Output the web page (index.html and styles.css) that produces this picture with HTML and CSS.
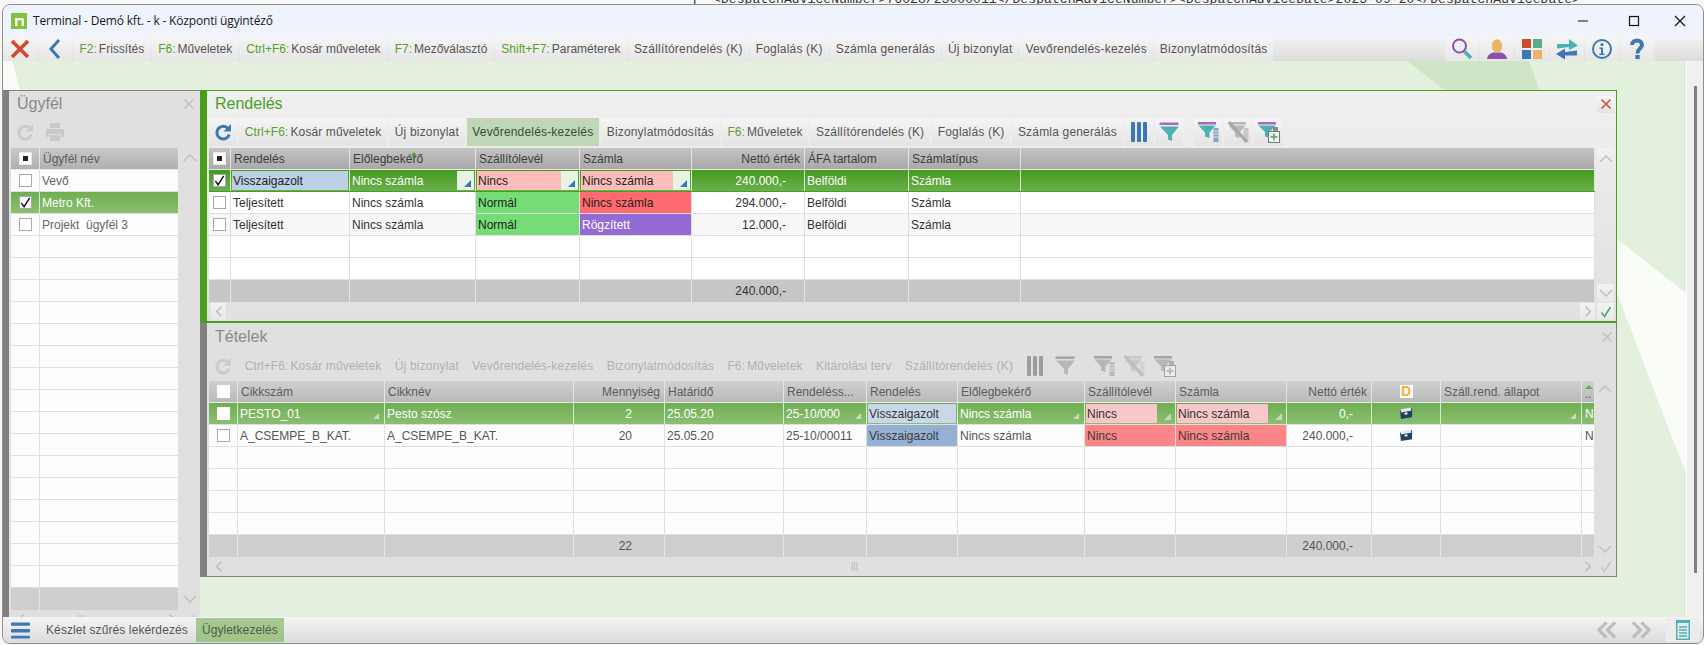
FILE: index.html
```html
<!DOCTYPE html>
<html lang="hu">
<head>
<meta charset="utf-8">
<title>Terminal</title>
<link rel="stylesheet" href="styles.css">
</head>
<body>
<svg class="sprite" aria-hidden="true">
  <symbol id="i-refresh" viewBox="0 0 24 24"><path d="M18.5 8.5A7.6 7.6 0 1 0 19.5 15" fill="none" stroke="currentColor" stroke-width="3.6"/><path d="M21.5 2.5V11.5H12.5Z" fill="currentColor"/></symbol>
  <symbol id="i-bars" viewBox="0 0 20 20"><rect x="2" y="0" width="4" height="20" rx="1" fill="#3c78b5"/><rect x="8" y="0" width="4" height="20" rx="1" fill="#3c78b5"/><rect x="14" y="0" width="4" height="20" rx="1" fill="#3c78b5"/></symbol>
  <symbol id="i-filter" viewBox="0 0 20 20"><rect x="0.500" y="0.500" width="19" height="2.500" fill="#a56bc0"/><path d="M1 4.500H20L13 13V19L9 17.500V13Z" fill="#4db0b5"/></symbol>
  <symbol id="i-filter-col" viewBox="0 0 28 28"><rect x="4" y="4" width="18" height="2.500" fill="#a56bc0"/><path d="M4.500 7.500H21.500L15.500 14.500V20L11 18.500V14.500Z" fill="#4db0b5"/><rect x="19.500" y="10" width="5" height="14" fill="#8b9fc0"/><path d="M19.500 13H24.500M19.500 16H24.500M19.500 19H24.500" stroke="#dfe6f0"/></symbol>
  <symbol id="i-filter-off" viewBox="0 0 28 28"><rect x="4" y="4" width="18" height="2.500" fill="#b8b8b8"/><path d="M4.500 7.500H21.500L15.500 14.500V20L11 18.500V14.500Z" fill="#b8b8b8"/><rect x="19.500" y="10" width="5" height="14" fill="#c8c8c8"/><path d="M5 4L23 24" stroke="#a8a8a8" stroke-width="3"/></symbol>
  <symbol id="i-filter-add" viewBox="0 0 28 28"><rect x="4" y="4" width="18" height="2.500" fill="#a56bc0"/><path d="M4.500 7.500H21.500L15.500 14V20L11 18.500V14Z" fill="#4db0b5"/><rect x="19" y="9" width="5" height="4" fill="#8c8c8c"/><rect x="14.500" y="13.500" width="11" height="11" fill="#f1f1f1" stroke="#777"/><path d="M20 15.500V22.500M16.500 19H23.500" stroke="#46a86c" stroke-width="1.500"/></symbol>
  <symbol id="i-case" viewBox="0 0 14 14"><path d="M0 4L13 1V11L1 13Z" fill="#23405f"/><path d="M1 2.500L12 0.500V4L1 6Z" fill="#dbe9f2"/><rect x="5" y="6" width="3" height="2" fill="#fff"/></symbol>
  <symbol id="i-up" viewBox="0 0 16 10"><path d="M2 8L8 2L14 8" fill="none" stroke="currentColor" stroke-width="1.600"/></symbol>
  <symbol id="i-down" viewBox="0 0 16 10"><path d="M2 2L8 8L14 2" fill="none" stroke="currentColor" stroke-width="1.600"/></symbol>
  <symbol id="i-left" viewBox="0 0 10 16"><path d="M8 2L2 8L8 14" fill="none" stroke="currentColor" stroke-width="1.600"/></symbol>
  <symbol id="i-right" viewBox="0 0 10 16"><path d="M2 2L8 8L2 14" fill="none" stroke="currentColor" stroke-width="1.600"/></symbol>
  <symbol id="i-check" viewBox="0 0 14 14"><path d="M2.500 7.500L5.500 11.500L11.500 2" fill="none" stroke="currentColor" stroke-width="1.500"/></symbol>
  <symbol id="i-x" viewBox="0 0 16 16"><path d="M2 2L14 14M14 2L2 14" fill="none" stroke="currentColor" stroke-width="2"/></symbol>
</svg>

<div class="desk"><span class="desk-brace">j</span><span class="desk-xml">&lt;DespatchAdviceNumber&gt;76028/23000011&lt;/DespatchAdviceNumber&gt;&lt;DespatchAdviceDate&gt;2023-09-20&lt;/DespatchAdviceDate&gt;</span></div>

<div class="win">
  <header class="titlebar">
    <svg class="logo" viewBox="0 0 16 16"><rect width="16" height="16" fill="#83c13f"/><path d="M4 13V5H11.500Q13 5 13 6.500V13H10.500V7.200H6.500V13Z" fill="#f4f7e6"/></svg>
    <span class="title-text">Terminal - Demó kft. - k - Központi ügyintéző</span>
    <div class="winctl">
      <svg viewBox="0 0 46 30" class="wc"><path d="M13 15H23" stroke="#111" stroke-width="1.200"/></svg>
      <svg viewBox="0 0 46 30" class="wc"><rect x="18.500" y="10.500" width="9" height="9" fill="none" stroke="#111" stroke-width="1.200"/></svg>
      <svg viewBox="0 0 46 30" class="wc"><path d="M18 10L28 20M28 10L18 20" stroke="#111" stroke-width="1.200"/></svg>
    </div>
  </header>

  <nav class="topbar">
    <button class="btn ic-main"><svg class="ico20" viewBox="0 0 20 20"><path d="M2 2L18 18M18 2L2 18" stroke="#d24a2e" stroke-width="3.600" fill="none"/></svg></button>
    <button class="btn ic-back"><svg class="ico20" viewBox="0 0 20 20"><path d="M14 1L6 10L14 19" stroke="#3c78b5" stroke-width="3" fill="none"/></svg></button>
    <button class="btn lab"><b>F2:</b>Frissítés</button>
    <button class="btn lab"><b>F6:</b>Műveletek</button>
    <button class="btn lab"><b>Ctrl+F6:</b>Kosár műveletek</button>
    <button class="btn lab"><b>F7:</b>Mezőválasztó</button>
    <button class="btn lab"><b>Shift+F7:</b>Paraméterek</button>
    <button class="btn">Szállítórendelés (K)</button>
    <button class="btn">Foglalás (K)</button>
    <button class="btn">Számla generálás</button>
    <button class="btn">Új bizonylat</button>
    <button class="btn">Vevőrendelés-kezelés</button>
    <button class="btn">Bizonylatmódosítás</button>
    <div class="topicons">
      <button class="btn ic-top"><svg class="ico24" viewBox="0 0 24 24"><circle cx="9.500" cy="9" r="6.500" fill="none" stroke="#8e4fa8" stroke-width="2"/><path d="M14.500 14.500L21 21" stroke="#4db0b5" stroke-width="3.500"/></svg></button>
      <button class="btn ic-top"><svg class="ico24" viewBox="0 0 24 24"><path d="M2 22Q2.500 17 8 15.500H16Q21.500 17 22 22Z" fill="#8e4fa8"/><ellipse cx="12" cy="9" rx="5.200" ry="6.800" fill="#ecb565"/></svg></button>
      <button class="btn ic-top"><svg class="ico24" viewBox="0 0 24 24"><rect x="2" y="2" width="9" height="9" fill="#cf4b2e"/><rect x="13" y="2" width="9" height="9" fill="#5aae8c"/><rect x="2" y="13" width="9" height="9" fill="#3c78b5"/><rect x="13" y="13" width="9" height="9" fill="#ecb565"/></svg></button>
      <button class="btn ic-top"><svg class="ico24" viewBox="0 0 24 24"><path d="M2 7H14V2L23 8.500L14 13V10L2 11.500Z" fill="#4db0b5"/><path d="M22 13.500L10 15V11.500L1 17L10 22.500V18.500H22Z" fill="#3c78b5"/></svg></button>
      <button class="btn ic-top"><svg class="ico24" viewBox="0 0 24 24"><circle cx="12" cy="12" r="9" fill="none" stroke="#3c78b5" stroke-width="2"/><circle cx="12" cy="7.500" r="1.600" fill="#3c78b5"/><path d="M9.500 10.500H13V16.500H14.500V18H9.500V16.500H11V12H9.500Z" fill="#3c78b5"/></svg></button>
      <button class="btn ic-top"><svg class="ico24" viewBox="0 0 24 24"><path d="M7 8C7 2 17 2 17 8C17 11.500 12.500 11.500 12.500 16.500" fill="none" stroke="#3c78b5" stroke-width="4"/><rect x="10.300" y="18" width="4.400" height="4" fill="#3c78b5"/></svg></button>
    </div>
  </nav>

  <main class="main">
    <svg class="wall" viewBox="0 0 1683 556" preserveAspectRatio="none">
      <path d="M0 0H9L17 29H0Z" fill="#f9fcf7"/>
      <path d="M1404 0H1526L1570 120H1560Z" fill="#cfe5c5"/>
      <path d="M1540 120L1683 232V411L1670 379L1614 232Z" fill="#f9fcf7"/>
    </svg>

    <section class="panel side">
      <h2 class="ptitle">Ügyfél<svg class="xbtn"><use href="#i-x"/></svg></h2>
      <div class="ptools">
        <button class="tb tb-icon off"><svg class="ico20"><use href="#i-refresh"/></svg></button>
        <button class="tb tb-icon off"><svg class="ico20" viewBox="0 0 20 20"><rect x="5" y="1" width="10" height="5" fill="currentColor"/><path d="M1 7H19V15H16V12H4V15H1Z" fill="currentColor"/><rect x="5" y="13" width="10" height="6" fill="currentColor"/></svg></button>
      </div>
      <div class="body">
        <div class="g g-s">
          <div class="row head"><div class="c mid"><i class="cb mix"></i></div><div class="c">Ügyfél név</div></div>
          <div class="row"><div class="c mid"><i class="cb"></i></div><div class="c">Vevő</div></div>
          <div class="row sel"><div class="c mid"><i class="cb"><svg><use href="#i-check"/></svg></i></div><div class="c">Metro Kft.</div></div>
          <div class="row"><div class="c mid"><i class="cb"></i></div><div class="c">Projekt&nbsp; ügyfél 3</div></div>
          <div class="row"><div class="c"></div><div class="c"></div></div>
          <div class="row"><div class="c"></div><div class="c"></div></div>
          <div class="row"><div class="c"></div><div class="c"></div></div>
          <div class="row"><div class="c"></div><div class="c"></div></div>
          <div class="row"><div class="c"></div><div class="c"></div></div>
          <div class="row"><div class="c"></div><div class="c"></div></div>
          <div class="row"><div class="c"></div><div class="c"></div></div>
          <div class="row"><div class="c"></div><div class="c"></div></div>
          <div class="row"><div class="c"></div><div class="c"></div></div>
          <div class="row"><div class="c"></div><div class="c"></div></div>
          <div class="row"><div class="c"></div><div class="c"></div></div>
          <div class="row"><div class="c"></div><div class="c"></div></div>
          <div class="row"><div class="c"></div><div class="c"></div></div>
          <div class="row"><div class="c"></div><div class="c"></div></div>
          <div class="row"><div class="c"></div><div class="c"></div></div>
          <div class="row"><div class="c"></div><div class="c"></div></div>
          <div class="row foot"><div class="c"></div><div class="c"></div></div>
        </div>
        <div class="vs"><svg class="chev"><use href="#i-up"/></svg><svg class="chev"><use href="#i-down"/></svg></div>
      </div>
      <div class="hs"><span class="stile w"><svg class="chevh"><use href="#i-left"/></svg></span><span class="thumb">|||</span><span class="stile w"><svg class="chevh"><use href="#i-right"/></svg></span><span class="stile ok"><svg><use href="#i-check"/></svg></span></div>
    </section>

    <div class="stack">
      <section class="panel orders">
        <h2 class="ptitle">Rendelés<span class="xred"><svg><use href="#i-x"/></svg></span></h2>
        <div class="ptools">
          <button class="tb tb-icon"><svg class="ico20 blue"><use href="#i-refresh"/></svg></button>
          <button class="tb lab"><b>Ctrl+F6:</b>Kosár műveletek</button>
          <button class="tb">Új bizonylat</button>
          <button class="tb act">Vevőrendelés-kezelés</button>
          <button class="tb">Bizonylatmódosítás</button>
          <button class="tb lab"><b>F6:</b>Műveletek</button>
          <button class="tb">Szállítórendelés (K)</button>
          <button class="tb">Foglalás (K)</button>
          <button class="tb">Számla generálás</button>
          <button class="tb tb-icon"><svg class="ico20"><use href="#i-bars"/></svg></button>
          <button class="tb tb-icon"><svg class="ico20"><use href="#i-filter"/></svg></button>
          <button class="tb tb-icon tb-far"><svg class="ico28"><use href="#i-filter-col"/></svg></button>
          <button class="tb tb-icon"><svg class="ico28"><use href="#i-filter-off"/></svg></button>
          <button class="tb tb-icon"><svg class="ico28"><use href="#i-filter-add"/></svg></button>
        </div>
        <div class="body">
          <div class="g g-r">
            <div class="row head"><div class="c mid"><i class="cb mix"></i></div><div class="c">Rendelés</div><div class="c sort">Előlegbekérő</div><div class="c">Szállítólevél</div><div class="c">Számla</div><div class="c num">Nettó érték</div><div class="c">ÁFA tartalom</div><div class="c">Számlatípus</div><div class="c"></div></div>
            <div class="row sel"><div class="c mid"><i class="cb"><svg><use href="#i-check"/></svg></i></div><div class="c ed"><span class="fill st-blue">Visszaigazolt</span></div><div class="c ed"><span class="fill">Nincs számla</span><i class="tile"></i></div><div class="c ed"><span class="fill st-pink">Nincs</span><i class="tile"></i></div><div class="c ed"><span class="fill st-pink">Nincs számla</span><i class="tile"></i></div><div class="c val">240.000,-</div><div class="c">Belföldi</div><div class="c">Számla</div><div class="c"></div></div>
            <div class="row"><div class="c mid"><i class="cb"></i></div><div class="c">Teljesített</div><div class="c">Nincs számla</div><div class="c st-green">Normál</div><div class="c st-red">Nincs számla</div><div class="c val">294.000,-</div><div class="c">Belföldi</div><div class="c">Számla</div><div class="c"></div></div>
            <div class="row alt"><div class="c mid"><i class="cb"></i></div><div class="c">Teljesített</div><div class="c">Nincs számla</div><div class="c st-green">Normál</div><div class="c st-purple">Rögzített</div><div class="c val">12.000,-</div><div class="c">Belföldi</div><div class="c">Számla</div><div class="c"></div></div>
            <div class="row"><div class="c"></div><div class="c"></div><div class="c"></div><div class="c"></div><div class="c"></div><div class="c"></div><div class="c"></div><div class="c"></div><div class="c"></div></div>
            <div class="row"><div class="c"></div><div class="c"></div><div class="c"></div><div class="c"></div><div class="c"></div><div class="c"></div><div class="c"></div><div class="c"></div><div class="c"></div></div>
            <div class="row foot"><div class="c"></div><div class="c"></div><div class="c"></div><div class="c"></div><div class="c"></div><div class="c val">240.000,-</div><div class="c"></div><div class="c"></div><div class="c"></div></div>
          </div>
          <div class="vs"><span class="stile"><svg class="chev"><use href="#i-up"/></svg></span><span class="stile"><svg class="chev"><use href="#i-down"/></svg></span></div>
        </div>
        <div class="hs"><span class="stile w"><svg class="chevh"><use href="#i-left"/></svg></span><span class="stile w"><svg class="chevh"><use href="#i-right"/></svg></span><span class="stile ok"><svg><use href="#i-check"/></svg></span></div>
      </section>

      <section class="panel items">
        <h2 class="ptitle">Tételek<svg class="xbtn"><use href="#i-x"/></svg></h2>
        <div class="ptools">
          <button class="tb tb-icon off"><svg class="ico20"><use href="#i-refresh"/></svg></button>
          <button class="tb lab"><b>Ctrl+F6:</b>Kosár műveletek</button>
          <button class="tb">Új bizonylat</button>
          <button class="tb">Vevőrendelés-kezelés</button>
          <button class="tb">Bizonylatmódosítás</button>
          <button class="tb lab"><b>F6:</b>Műveletek</button>
          <button class="tb">Kitárolási terv</button>
          <button class="tb">Szállítórendelés (K)</button>
          <button class="tb tb-icon off"><svg class="ico20"><use href="#i-bars"/></svg></button>
          <button class="tb tb-icon off"><svg class="ico20"><use href="#i-filter"/></svg></button>
          <button class="tb tb-icon tb-far off"><svg class="ico28"><use href="#i-filter-col"/></svg></button>
          <button class="tb tb-icon off"><svg class="ico28"><use href="#i-filter-off"/></svg></button>
          <button class="tb tb-icon off"><svg class="ico28"><use href="#i-filter-add"/></svg></button>
        </div>
        <div class="body">
          <div class="g g-t">
            <div class="row head"><div class="c mid"><i class="cb"></i></div><div class="c">Cikkszám</div><div class="c">Cikknév</div><div class="c num">Mennyiség</div><div class="c">Határidő</div><div class="c">Rendeléss...</div><div class="c">Rendelés</div><div class="c">Előlegbekérő</div><div class="c">Szállítólevél</div><div class="c">Számla</div><div class="c num">Nettó érték</div><div class="c mid"><span class="dbadge">D</span></div><div class="c">Száll.rend. állapot</div><div class="c sort2">..</div></div>
            <div class="row sel"><div class="c mid"><i class="cb"></i></div><div class="c pick">PESTO_01</div><div class="c">Pesto szósz</div><div class="c qty">2</div><div class="c">25.05.20</div><div class="c pick">25-10/000</div><div class="c ed"><span class="fill st-blue">Visszaigazolt</span></div><div class="c pick">Nincs számla</div><div class="c ed"><span class="fill st-pink">Nincs</span><i class="tile"></i></div><div class="c ed"><span class="fill st-pink">Nincs számla</span><i class="tile"></i></div><div class="c val">0,-</div><div class="c mid"><svg class="case"><use href="#i-case"/></svg></div><div class="c pick"></div><div class="c clip">N</div></div>
            <div class="row"><div class="c mid"><i class="cb"></i></div><div class="c">A_CSEMPE_B_KAT.</div><div class="c">A_CSEMPE_B_KAT.</div><div class="c qty">20</div><div class="c">25.05.20</div><div class="c">25-10/00011</div><div class="c st-blue2">Visszaigazolt</div><div class="c">Nincs számla</div><div class="c st-red2">Nincs</div><div class="c st-red2">Nincs számla</div><div class="c val">240.000,-</div><div class="c mid"><svg class="case"><use href="#i-case"/></svg></div><div class="c"></div><div class="c clip">N</div></div>
            <div class="row"><div class="c"></div><div class="c"></div><div class="c"></div><div class="c"></div><div class="c"></div><div class="c"></div><div class="c"></div><div class="c"></div><div class="c"></div><div class="c"></div><div class="c"></div><div class="c"></div><div class="c"></div><div class="c"></div></div>
            <div class="row"><div class="c"></div><div class="c"></div><div class="c"></div><div class="c"></div><div class="c"></div><div class="c"></div><div class="c"></div><div class="c"></div><div class="c"></div><div class="c"></div><div class="c"></div><div class="c"></div><div class="c"></div><div class="c"></div></div>
            <div class="row"><div class="c"></div><div class="c"></div><div class="c"></div><div class="c"></div><div class="c"></div><div class="c"></div><div class="c"></div><div class="c"></div><div class="c"></div><div class="c"></div><div class="c"></div><div class="c"></div><div class="c"></div><div class="c"></div></div>
            <div class="row"><div class="c"></div><div class="c"></div><div class="c"></div><div class="c"></div><div class="c"></div><div class="c"></div><div class="c"></div><div class="c"></div><div class="c"></div><div class="c"></div><div class="c"></div><div class="c"></div><div class="c"></div><div class="c"></div></div>
            <div class="row foot"><div class="c"></div><div class="c"></div><div class="c"></div><div class="c qty">22</div><div class="c"></div><div class="c"></div><div class="c"></div><div class="c"></div><div class="c"></div><div class="c"></div><div class="c val">240.000,-</div><div class="c"></div><div class="c"></div><div class="c"></div></div>
          </div>
          <div class="vs"><svg class="chev"><use href="#i-up"/></svg><svg class="chev"><use href="#i-down"/></svg></div>
        </div>
        <div class="hs"><span class="stile w"><svg class="chevh"><use href="#i-left"/></svg></span><span class="thumb">|||</span><span class="stile w"><svg class="chevh"><use href="#i-right"/></svg></span><span class="stile ok"><svg><use href="#i-check"/></svg></span></div>
      </section>
    </div>

    <div class="strip"><i class="thumbv"></i></div>
  </main>

  <footer class="bottom">
    <button class="bb bb-menu"><svg viewBox="0 0 20 18" class="ico20"><rect y="1" width="20" height="3.500" rx="1" fill="#3c78b5"/><rect y="8" width="20" height="3.500" rx="1" fill="#3c78b5"/><rect y="15" width="20" height="3" rx="1" fill="#3c78b5"/></svg></button>
    <button class="bb">Készlet szűrés lekérdezés</button>
    <button class="bb act">Ügyletkezelés</button>
    <div class="bottom-right">
      <svg class="dbl" viewBox="0 0 22 20"><path d="M11 2L3 10L11 18M20 2L12 10L20 18" fill="none" stroke="#bdbdbd" stroke-width="3.400"/></svg>
      <svg class="dbl" viewBox="0 0 22 20"><path d="M2 2L10 10L2 18M11 2L19 10L11 18" fill="none" stroke="#bdbdbd" stroke-width="3.400"/></svg>
      <span class="listbtn"><svg viewBox="0 0 14 20" class="listico"><rect x="0.750" y="0.750" width="12.500" height="18.500" fill="none" stroke="#4db0b5" stroke-width="1.500"/><rect x="0" y="0" width="14" height="3" fill="#4db0b5"/><path d="M3 7H11M3 10H11M3 13H11M3 16H11" stroke="#4db0b5" stroke-width="1.500"/></svg></span>
    </div>
  </footer>
</div>
</body>
</html>
```
FILE: styles.css
```css
* { box-sizing: border-box; }
html, body { margin: 0; height: 100%; overflow: hidden; background: #f7f7f7; }
body { font: 12px/1 "Liberation Sans", Arial, sans-serif; color: #333; }
button { font: inherit; color: inherit; border: 0; padding: 0; background: none; }
b { font-weight: 400; color: #5c9e2a; margin-right: 2px; }
.sprite { display: none; }

.desk { height: 4px; overflow: hidden; line-height: 0; white-space: nowrap; display: flex; font-family: "Liberation Mono", monospace; font-size: 13px; color: #333; padding-left: 690px; }
.desk-brace { width: 23px; }
.desk-xml { letter-spacing: .08px; }

.win { margin-left: 2px; width: 1702px; height: 640px; border: 1px solid #8f8f8f; border-radius: 8px; overflow: hidden; display: flex; flex-direction: column; background: #e4f0de; }

.titlebar { height: 31px; flex: none; display: flex; align-items: center; background: #eff3fb; padding-left: 8px; }
.logo { width: 16px; height: 16px; flex: none; }
.title-text { margin-left: 6px; font: 12px "Open Sans", sans-serif; color: #1a1a1a; letter-spacing: -.17px; }
.winctl { margin-left: auto; display: flex; }
.wc { width: 46px; height: 30px; display: block; }

.topbar { height: 25px; flex: none; display: flex; gap: 1px; background: linear-gradient(#f4f4f4, #dcdcdc); padding-right: 49px; color: #555; }
.btn { height: 25px; padding: 0 6px; white-space: nowrap; letter-spacing: .2px; background: linear-gradient(#f6f6f6, #e6e6e6); }
.btn.lab { padding: 0 6.5px; letter-spacing: 0; }
.ic-main { width: 35px; padding: 0 7px; display: flex; align-items: center; }
.ic-back { width: 33px; padding: 0 6px; display: flex; align-items: center; }
.topicons { margin-left: auto; display: flex; gap: 1px; }
.ic-top { width: 34px; padding: 0 5px; display: flex; align-items: center; }
.ico20 { width: 20px; height: 20px; display: block; }
.ico24 { width: 24px; height: 24px; display: block; }
.ico28 { width: 28px; height: 28px; display: block; }
.blue { color: #3c78b5; }

.main { flex: 1; min-height: 0; position: relative; display: flex; padding-top: 29px; }
.wall { position: absolute; left: 0; top: 0; width: 1683px; height: 556px; }

.panel { position: relative; display: flex; flex-direction: column; background: #e0e0e0; }
.side { width: 197px; height: 527px; overflow: hidden; border-left: 6px solid #808080; border-top: 1px solid #808080; color: #666; }
.stack { width: 1417px; position: relative; flex: none; display: flex; flex-direction: column; }
.orders { height: 233px; border: solid #4a9e1f; border-width: 1px 1px 2px 7px; background: linear-gradient(#f0f0f0, #e0e0e0); }
.items { height: 254px; border: solid #808080; border-width: 0 1px 1px 7px; color: #555; }

.ptitle { margin: 0; height: 27px; flex: none; display: flex; align-items: center; justify-content: space-between; font: 400 16px "Liberation Sans", Arial, sans-serif; padding: 0 2px 2px 8px; color: #8a8a8a; }
.orders .ptitle { color: #4a9e1f; padding-bottom: 1px; }
.items .ptitle { height: 29px; }
.xbtn { width: 12px; height: 12px; margin-right: 1px; color: #c2c2c2; }
.side .xbtn { margin-right: 3px; }
.xred { width: 17px; height: 17px; background: linear-gradient(#f7f7f7, #e4e4e4); display: flex; align-items: center; justify-content: center; color: #d24a2e; }
.xred svg { width: 12px; height: 12px; }

.ptools { height: 28px; flex: none; display: flex; gap: 2px; padding-left: 2px; color: #555; margin-bottom: 2px; }
.items .ptools { margin-bottom: 1px; color: #b0b0b0; }
.items .ptools b { color: #b0b0b0; }
.tb { height: 28px; padding: 0 5.7px; white-space: nowrap; letter-spacing: .18px; background: linear-gradient(#f5f5f5, #e3e3e3); }
.tb.lab { letter-spacing: .1px; }
.items .tb, .side .tb { background: none; }
.tb.act { background: #c0d7b7; color: #3c4d35; }
.tb-icon { width: 28px; padding: 0; display: flex; align-items: center; justify-content: center; }
.tb-far { margin-left: 9px; }
.off { color: #bcbcbc; }
.off svg { filter: grayscale(1) opacity(.6); }

.body { display: flex; flex: none; }
.g { flex: none; }
.g-s { width: 168px; margin-left: 2px; }
.g-r { width: 1386px; margin-left: 2px; }
.g-t { width: 1386px; margin-left: 2px; }
.row { display: grid; height: 22px; background: #fff; border-bottom: 1px solid #e0e0e0; }
.g-s .row { grid-template-columns: 29px 139px; background: #fdfdfd; }
.g-r .row { grid-template-columns: 22px 119px 126px 104px 112px 113px 104px 112px 574px; }
.g-t .row { grid-template-columns: 29px 147px 189px 91px 119px 83px 91px 127px 91px 111px 85px 69px 141px 13px; background: #fdfdfd; }
.row.alt { background: #f7f7f7; }
.c { border-right: 1px solid #e0e0e0; display: flex; align-items: center; padding-left: 2px; overflow: hidden; white-space: nowrap; min-width: 0; }
.c.mid { padding: 0; justify-content: center; }
.c.num { justify-content: flex-end; padding-right: 4px; }
.c.val { justify-content: flex-end; padding-right: 18px; }
.c.qty { justify-content: flex-end; padding-right: 32px; }

.row.head { background: linear-gradient(#c3c3c3, #a9a9a9); border-bottom-color: #e8e8e8; color: #3d3d3d; }
.items .row.head { background: linear-gradient(#d0d0d0, #b9b9b9); color: #5c5c5c; }
.side .row.head { background: linear-gradient(#c9c9c9, #b0b0b0); color: #5c5c5c; }
.head .c { border-right-color: #e4e4e4; padding-left: 3px; }
.head .c.mid { padding: 0; }
.row.sel { background: linear-gradient(#459a1c, #6bb04f); color: #fff; border-bottom-color: #4a9e1f; }
.side .row.sel, .items .row.sel { background: linear-gradient(#6fae52, #8abf70); border-bottom-color: #e0e0e0; }
.sel .c { border-right-color: #d8ead0; }
.foot.row { background: #c6c6c6; border-bottom: 0; }
.side .foot.row, .items .foot.row { background: #cfcfcf; }
.foot .c { border-right-color: #e4e4e4; }

.cb { width: 13px; height: 13px; background: #fff; border: 1px solid #a9a9a9; display: flex; align-items: center; justify-content: center; color: #111; }
.cb svg { width: 13px; height: 13px; flex: none; }
.cb.mix::after { content: ""; width: 5px; height: 5px; background: #222; }
.head .cb { border-color: #e8e8e8; }
.items .head .cb, .items .sel .cb { border-color: #fff; }
.sort, .sort2 { position: relative; }
.sort::before { content: ""; position: absolute; left: 61px; top: 4px; border: solid transparent; border-width: 0 3px 4px; border-bottom-color: #4a9e1f; }
.sort2::before { content: ""; position: absolute; left: 3px; top: 4px; border: solid transparent; border-width: 0 4px 4px; border-bottom-color: #5daf3e; }
.sort2 { align-items: flex-end; padding-bottom: 2px; }

.c.ed { padding: 1px; align-items: stretch; }
.fill { flex: 1; min-width: 0; display: flex; align-items: center; padding-left: 1px; }
.st-blue { background: #bcd0e6; color: #222; }
.st-pink { background: #ffbcbc; color: #222; }
.items .st-blue { background: #c9d8e9; color: #333; }
.items .st-pink { background: #f8c7c9; color: #333; }
.tile { flex: none; width: 17px; background: #e8f3e3; display: flex; align-items: flex-end; justify-content: flex-end; padding: 0 3px 3px 0; }
.tile::after { content: ""; border: solid transparent; border-width: 0 0 7px 7px; border-bottom-color: #3a78c0; }
.items .tile { background: none; }
.items .tile::after { border-bottom-color: #c9d6c2; }
.pick { position: relative; }
.pick::after { content: ""; position: absolute; right: 5px; bottom: 5px; border-style: solid; border-color: transparent transparent #c9d6c2; border-width: 0 0 6px 6px; }
.st-green { background: #76dd76; color: #222; }
.st-red { background: #ff6b6f; color: #222; }
.st-purple { background: #946bd6; color: #fff; }
.st-blue2 { background: #94b1d4; color: #3c3c3c; }
.st-red2 { background: #fb8587; color: #3c3c3c; }
.dbadge { width: 13px; height: 13px; background: #fff; color: #f4b030; font: 700 14px/13px "Liberation Sans", sans-serif; text-align: center; }
.case { width: 13px; height: 13px; display: block; }
.clip { padding-left: 3px; }

.vs { width: 20px; flex: none; display: flex; flex-direction: column; justify-content: space-between; align-items: center; padding: 0 0 0 1px; color: #c2c2c2; }
.side .vs { width: 21px; height: 462px; padding: 5px 0 6px; }
.items .vs { height: 176px; padding: 3px 0; }
.orders .vs { height: 154px; }
.chev { width: 16px; height: 10px; }
.stile { height: 18px; width: 17px; flex: none; background: linear-gradient(#f2f2f2, #e8e8e8); display: flex; align-items: center; justify-content: center; }
.orders .vs .stile:first-child { height: 22px; }
.hs { display: flex; align-items: center; height: 19px; flex: none; padding-left: 4px; color: #b9b9b9; }
.hs .stile.w { width: 15px; height: 17px; }
.hs .stile.w:nth-last-child(2) { margin-left: auto; margin-right: 2px; }
.chevh { width: 8px; height: 13px; }
.stile.ok { color: #46a86c; margin-right: 2px; height: 17px; }
.stile.ok svg { width: 14px; height: 14px; }
.items .hs .stile, .side .hs .stile { background: none; }
.items .stile.ok, .side .stile.ok { color: #c6c6c6; }
.thumb { margin-left: 625px; color: #b5b5b5; font-size: 9px; }
.side .thumb { margin-left: 50px; }

.strip { position: absolute; right: 0; top: 0; width: 17px; height: 100%; background: #f0f0f0; border-left: 1px solid #fff; }
.thumbv { display: block; width: 3px; height: 487px; margin: 25px 0 0 7px; background: #7f7f7f; }

.bottom { height: 26px; flex: none; display: flex; gap: 2px; align-items: center; background: linear-gradient(#f4f4f4, #dcdcdc); position: relative; color: #555; }
.bb { height: 24px; padding: 0 6px; white-space: nowrap; letter-spacing: .1px; }
.bb-menu { width: 35px; padding: 0 8px; display: flex; align-items: center; }
.bb.act { background: linear-gradient(#a8c893, #9fc389); color: #4f5e46; }
.bottom-right { margin-left: auto; display: flex; align-items: center; }
.dbl { width: 21px; height: 20px; margin-right: 14px; display: block; }
.listbtn { width: 34px; height: 24px; display: flex; align-items: center; justify-content: center; background: #ececec; margin-right: 3px; }
.listico { width: 14px; height: 20px; display: block; }
```
